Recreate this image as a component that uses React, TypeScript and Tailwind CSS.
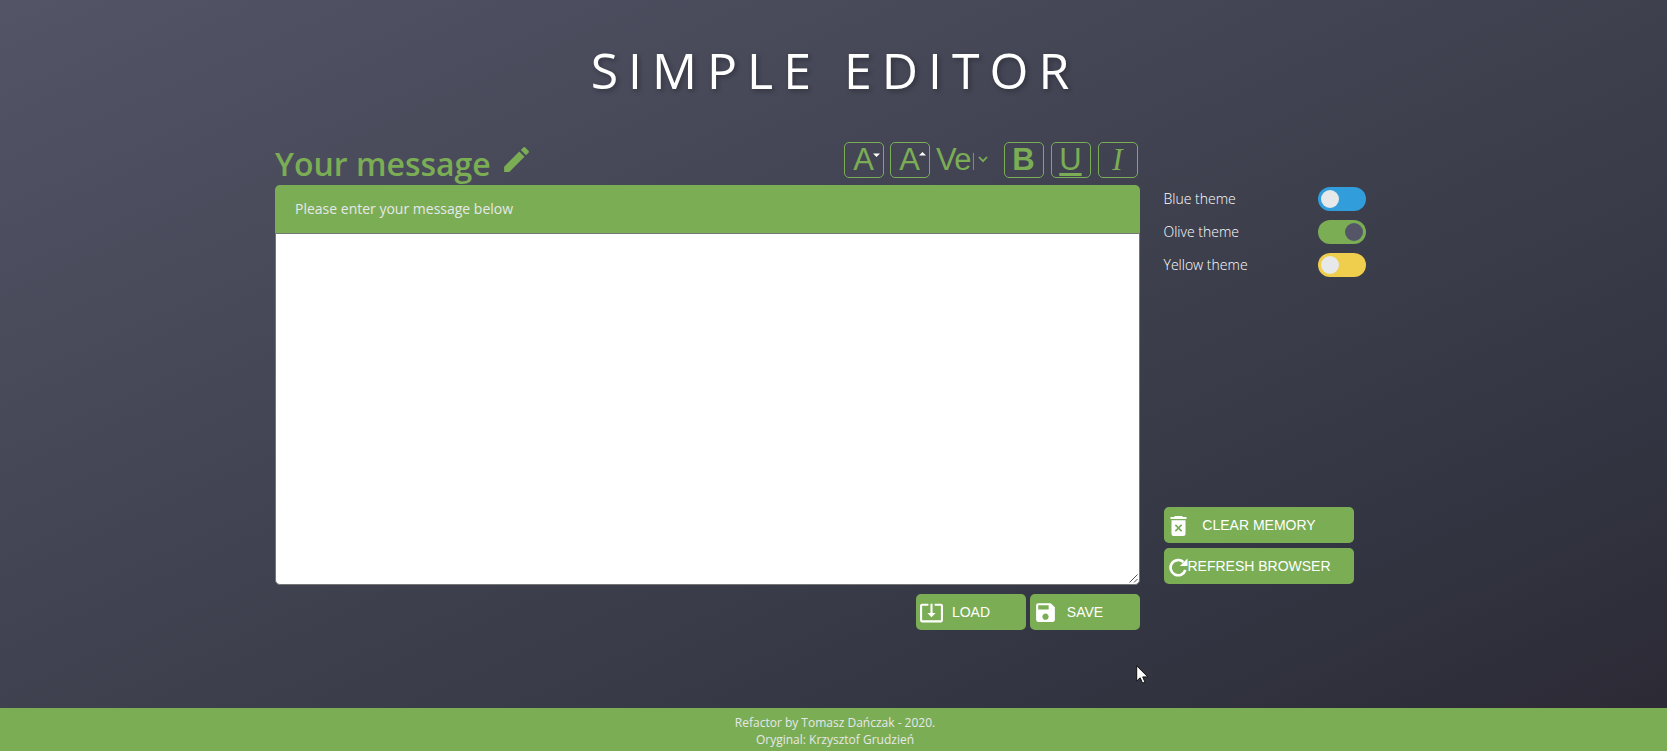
import type { ReactNode } from "react";
import { MdEdit, MdSystemUpdateAlt, MdSave } from "react-icons/md";

function ToolButton({ label, children }: { label: string; children: ReactNode }) {
  return (
    <button
      aria-label={label}
      className="relative flex h-9 w-10 items-center justify-center rounded-[5px] border border-[#7bad55] pr-px pb-px text-[31px] leading-none text-[#7bad55]"
    >
      {children}
    </button>
  );
}

function ActionButton({ icon, className, children }: { icon: ReactNode; className: string; children: ReactNode }) {
  return (
    <button
      className={`relative flex h-9 items-center justify-center rounded-[5px] bg-[#7bad55] text-[14px] leading-none text-white uppercase ${className}`}
    >
      {icon}
      <span className="whitespace-nowrap">{children}</span>
    </button>
  );
}

function ThemeToggle({ label, color, on }: { label: string; color: string; on?: boolean }) {
  return (
    <div className="flex h-6 w-[203px] items-center justify-between">
      <span className="pl-[0.5px] font-['Open_Sans',sans-serif] text-[14px] leading-6 font-light text-white">
        {label}
      </span>
      <span className={`flex h-6 w-12 items-center rounded-full px-[3px] ${color} ${on ? "justify-end" : ""}`}>
        <span className={`h-[18px] w-[18px] rounded-full ${on ? "bg-[#555568]" : "bg-[#e6e8ea]"}`} />
      </span>
    </div>
  );
}

export default function App() {
  return (
    <div className="relative flex h-[751px] w-full flex-col overflow-hidden bg-[linear-gradient(to_bottom_right,#535466_0%,#3e404e_50%,#323541_78%,#2b2833_100%)] font-['Liberation_Sans',Arial,sans-serif]">
      <h1 className="mt-[35px] h-[71px] pl-[3px] text-center font-['Open_Sans',sans-serif] text-[50px] leading-[70px] tracking-[10px] text-white uppercase [text-shadow:2px_2px_5px_rgba(0,0,0,0.3)]">
        Simple editor
      </h1>

      <main className="ml-[275px] flex pt-9">
        <div className="w-[865px]">
          <div className="flex h-[43px] justify-between">
            <div className="flex">
              <h2 className="font-['Open_Sans',sans-serif] text-[32px] leading-[43px] font-semibold whitespace-nowrap text-[#7bad55]">
                Your message
              </h2>
              <MdEdit className="mt-[1px] ml-[9px] size-[33px] text-[#7bad55]" />
            </div>
            <div className="mr-[2px] flex h-9">
              <ToolButton label="Decrease font size">
                A
                <svg className="absolute top-[10px] left-[28px] h-[4px] w-[7px]" viewBox="0 0 7 4">
                  <path d="M0 .5H7L3.5 4Z" fill="#fff" />
                </svg>
              </ToolButton>
              <div className="ml-[6px]">
                <ToolButton label="Increase font size">
                  A
                  <svg className="absolute top-[9px] left-[28px] h-[4px] w-[7px]" viewBox="0 0 7 4">
                    <path d="M0 3.5H7L3.5 0Z" fill="#fff" />
                  </svg>
                </ToolButton>
              </div>
              <div className="ml-[6px] flex h-9 w-[62px] items-center text-[#7bad55]">
                <span className="-mt-[1px] w-[38px] overflow-hidden text-[31px] leading-[34px] tracking-[-0.6px]">
                  Ver
                </span>
                <svg className="-mt-[1px] ml-[4px] h-[7px] w-[10px]" viewBox="0 0 10 7" fill="none">
                  <path d="M1 1L5 5.2L9 1" stroke="currentColor" strokeWidth="1.8" />
                </svg>
              </div>
              <div className="ml-[6px] flex gap-[7px]">
                <ToolButton label="Bold">
                  <b>B</b>
                </ToolButton>
                <ToolButton label="Underline">
                  <span className="underline decoration-[3px] underline-offset-[3px]">U</span>
                </ToolButton>
                <ToolButton label="Italic">
                  <i className="font-['Liberation_Serif',serif]">I</i>
                </ToolButton>
              </div>
            </div>
          </div>

          <div className="h-12 rounded-t-[5px] bg-[#7bad55] pl-5 font-['Open_Sans',sans-serif] text-[14px] leading-[48px] text-[#e6e8ea]">
            Please enter your message below
          </div>
          <div className="relative h-[352px] rounded-b-[5px] border border-[#767676] bg-white">
            <svg className="absolute right-px bottom-px size-[9px]" viewBox="0 0 9 9" fill="none">
              <path d="M.5 8.5L8.5.5M5 8.5L8.5 5" stroke="#555" strokeWidth="1" />
            </svg>
          </div>

          <div className="mt-[9px] flex justify-end gap-1">
            <ActionButton
              className="w-[110px]"
              icon={<MdSystemUpdateAlt className="absolute top-[6px] left-[3px] size-[25px]" />}
            >
              Load
            </ActionButton>
            <ActionButton className="w-[110px]" icon={<MdSave className="absolute top-[6px] left-[3px] size-[25px]" />}>
              Save
            </ActionButton>
          </div>
        </div>

        <aside className="ml-[23px] flex h-[442px] flex-col justify-between pt-[45px]">
          <div className="flex flex-col gap-[9px]">
            <ThemeToggle label="Blue theme" color="bg-[#329ddb]" />
            <ThemeToggle label="Olive theme" color="bg-[#7bad55]" on />
            <ThemeToggle label="Yellow theme" color="bg-[#f0ce4d]" />
          </div>
          <div className="ml-px flex flex-col gap-[5px]">
            <ActionButton
              className="w-[190px]"
              icon={
                <svg className="absolute top-[9px] left-[6px] h-[20px] w-[17px]" viewBox="0 0 17 20" fill="currentColor">
                  <path
                    fillRule="evenodd"
                    d="M5 0H12L13 1H16.5V3H.5V1H4ZM1.5 4.2H15.5V18Q15.500 20 13.500 20H3.500Q1.500 20 1.500 18ZM6 8.200L4.800 9.400L7.300 12L4.800 14.600L6 15.800L8.500 13.200L11 15.800L12.200 14.600L9.700 12L12.200 9.400L11 8.200L8.500 10.800Z"
                  />
                </svg>
              }
            >
              Clear memory
            </ActionButton>
            <ActionButton
              className="w-[190px]"
              icon={
                <svg className="absolute top-[10px] left-[5px] size-[19px]" viewBox="0 0 19 19" fill="none">
                  <path d="M14.400 4.100A7.600 7.600 0 1 0 16.400 12" stroke="currentColor" strokeWidth="2.700" />
                  <path d="M18.500.5V8H10.800Z" fill="currentColor" />
                </svg>
              }
            >
              Refresh browser
            </ActionButton>
          </div>
        </aside>
      </main>

      <footer className="mt-auto h-[43px] bg-[#7bad55] pt-[6px] pl-[3px] text-center font-['Open_Sans',sans-serif] text-[12px] leading-[17px] text-[#e6e8ea]">
        <p>Refactor by Tomasz Dańczak - 2020.</p>
        <p>Oryginal: Krzysztof Grudzień</p>
      </footer>

      <svg className="absolute top-[665px] left-[1136px] h-[20px] w-[13px]" viewBox="0 0 13 20">
        <path d="M.7.8V16L4.200 12.800L6.600 18.200L9 17.100L6.700 11.900H11.800Z" fill="#fff" stroke="#111" strokeWidth="1" />
      </svg>
    </div>
  );
}
